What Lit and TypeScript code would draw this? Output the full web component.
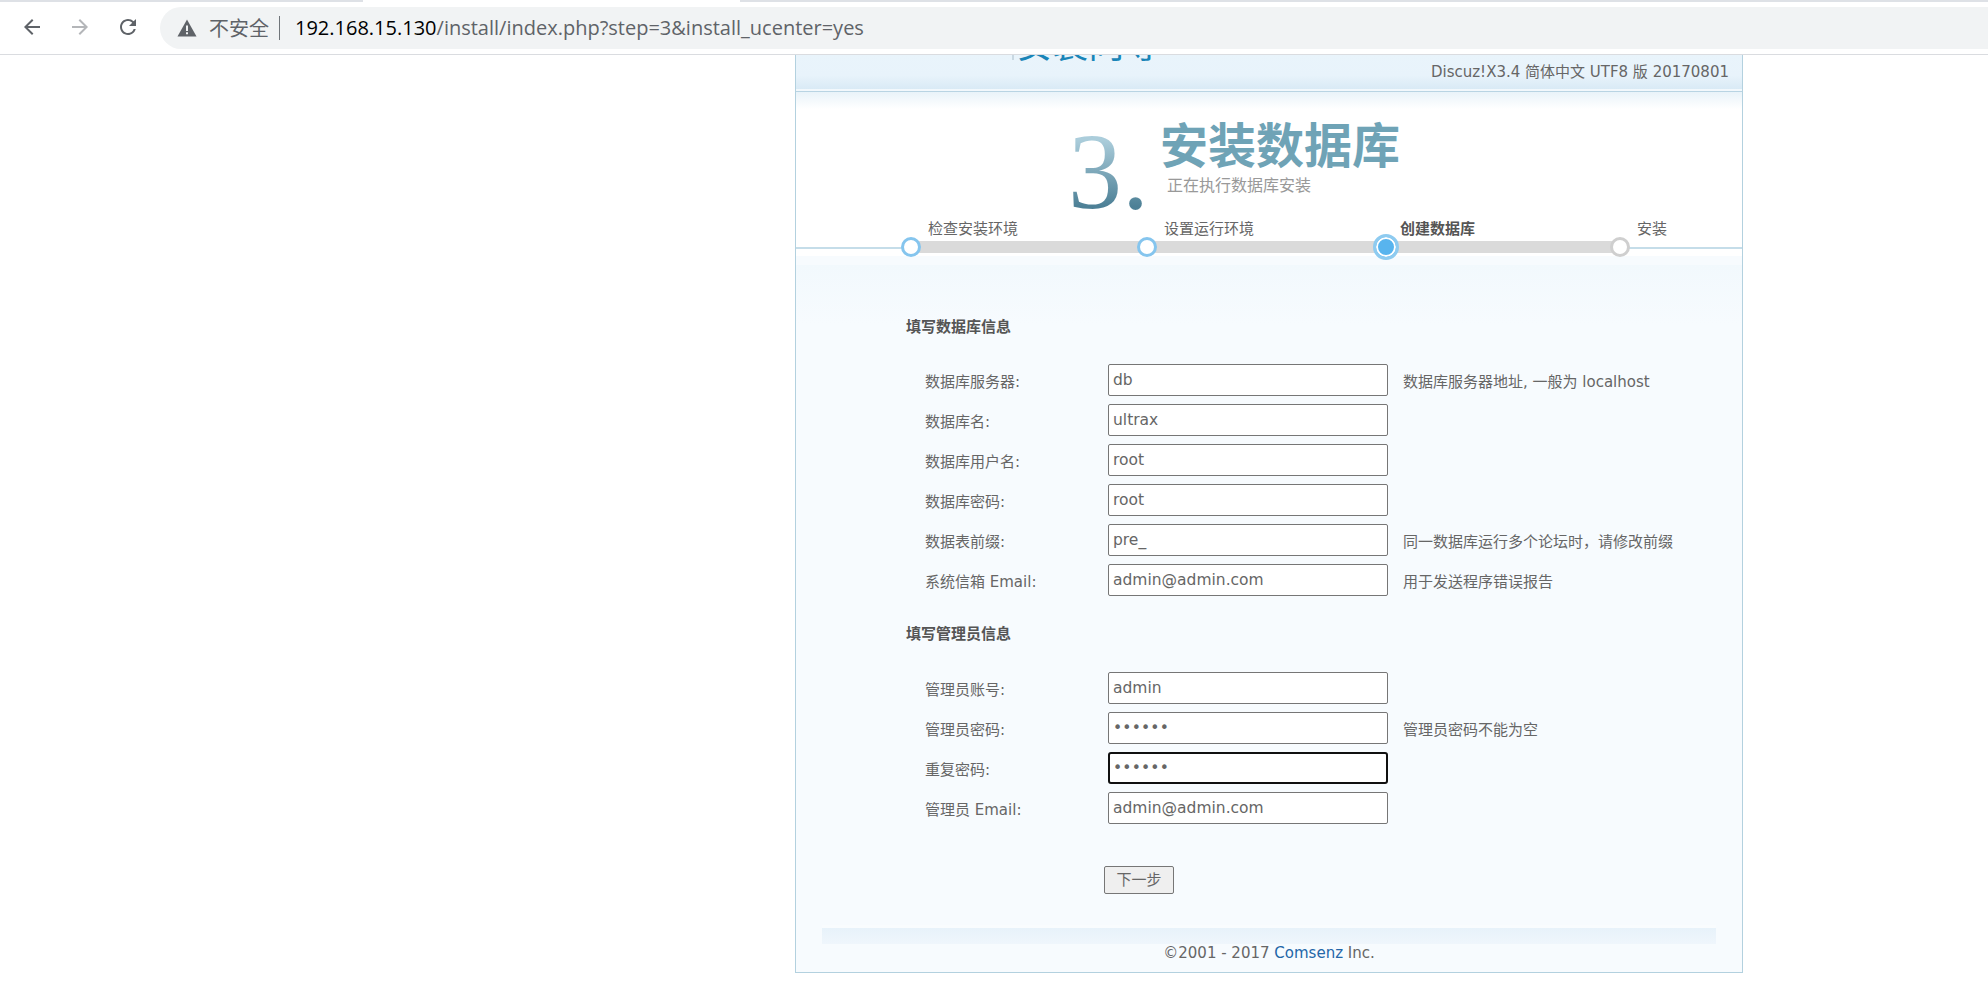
import { LitElement, html, css } from "lit";
import { customElement } from "lit/decorators.js";

const DB_ROWS = [
  { label: "数据库服务器:", value: "db", hint: "数据库服务器地址, 一般为 localhost" },
  { label: "数据库名:", value: "ultrax", hint: "" },
  { label: "数据库用户名:", value: "root", hint: "" },
  { label: "数据库密码:", value: "root", hint: "" },
  { label: "数据表前缀:", value: "pre_", hint: "同一数据库运行多个论坛时，请修改前缀" },
  { label: "系统信箱 Email:", value: "admin@admin.com", hint: "用于发送程序错误报告" },
];
const ADMIN_ROWS = [
  { label: "管理员账号:", value: "admin", hint: "" },
  { label: "管理员密码:", value: "••••••", hint: "管理员密码不能为空", pw: true },
  { label: "重复密码:", value: "••••••", hint: "", pw: true, focus: true },
  { label: "管理员 Email:", value: "admin@admin.com", hint: "" },
];
const STEPS = [
  { label: "检查安装环境", cls: "s1 done" },
  { label: "设置运行环境", cls: "s2 done" },
  { label: "创建数据库", cls: "s3 current" },
  { label: "安装", cls: "s4 todo" },
];

@customElement("app-root")
export class AppRoot extends LitElement {
  static styles = css`
    :host {
      display: block;
      width: 1988px;
      height: 986px;
      overflow: hidden;
      background: #fff;
      font-family: "DejaVu Sans", "Noto Sans CJK SC", sans-serif;
      font-size: 15px;
      color: #666;
    }
    .chrome {
      position: relative;
      z-index: 2;
      height: 55px;
      box-sizing: border-box;
      background: #fff;
      border-bottom: 1px solid #dadce0;
      display: flex;
      align-items: center;
      padding: 0 0 0 20px;
    }
    .tabedge {
      position: absolute;
      top: 0;
      height: 2px;
      background: #dee1e6;
    }
    .tabedge.l { left: 0; width: 363px; }
    .tabedge.r { left: 740px; right: 0; }
    .nav {
      width: 24px;
      height: 24px;
      margin-right: 24px;
      flex: none;
    }
    .nav svg { display: block; }
    .omni {
      flex: 1;
      margin-left: -4px;
      height: 42px;
      margin-top: 1px;
      background: #f1f3f4;
      border-radius: 21px 0 0 21px;
      display: flex;
      align-items: center;
      padding-left: 17px;
      font-family: "Open Sans", "Noto Sans CJK SC", sans-serif;
      font-size: 20px;
      color: #5f6368;
      white-space: nowrap;
    }
    .warn { margin-right: 12px; flex: none; }
    .sep { width: 1px; height: 24px; background: #70757a; margin: 0 15px 0 10px; }
    .host { color: #000; }
    .card {
      width: 948px;
      height: 918px;
      box-sizing: border-box;
      margin-left: 795px;
      border: 1px solid #b3d1df;
      border-top: 0;
      background: #f7fbfe;
    }
    .head {
      height: 34px;
      background: linear-gradient(#e9f4fb 0%, #e8f3fb 60%, #d9eaf5 100%);
      display: flex;
      align-items: flex-end;
      justify-content: space-between;
      overflow: hidden;
      padding-right: 13px;
      white-space: nowrap;
    }
    .logo {
      display: flex;
      align-items: flex-end;
      height: 5px;
      margin: 0 0 29px 35px;
    }
    .logo b {
      font: italic bold 48px/48px "Liberation Sans", sans-serif;
      color: #f7941d;
      height: 48px;
      margin-top: -43px;
      display: block;
      letter-spacing: -0.5px;
    }
    .logo i {
      display: block;
      width: 2px;
      height: 5px;
      background: #c9d8e2;
      margin: 0 2px 0 14px;
    }
    .logo span {
      font: 36px/36px "Noto Sans CJK SC", sans-serif;
      color: #1a85b8;
      height: 36px;
      margin-top: -31px;
      display: block;
    }
    .ver { line-height: 34px; height: 34px; }
    .rule {
      height: 3px;
      background: linear-gradient(#f2f8fc 0 2px, #b9d4e3 2px);
    }
    .white {
      height: 164px;
      background: linear-gradient(#e9f3f9, #fff 17px);
      display: flex;
      align-items: flex-start;
      padding: 0 0 0 272px;
    }
    .three {
      font: 108px/108px "Liberation Serif", serif;
      background: linear-gradient(#abcddb 20%, #4d8096 82%);
      -webkit-background-clip: text;
      background-clip: text;
      color: transparent;
      margin-top: 26px;
      height: 108px;
      width: 92px;
      flex: none;
    }
    .ttl h1 {
      margin: 20px 0 0;
      font: bold 48px/60px "Noto Sans CJK SC", sans-serif;
      color: #6fa3b6;
      letter-spacing: 0;
    }
    .ttl p {
      margin: 2px 0 0 7px;
      font-size: 16px;
      line-height: 24px;
      color: #999;
    }
    .steps {
      display: flex;
      height: 44px;
      margin-top: -35px;
      padding-left: 115px;
      background: linear-gradient(#c5dde9, #c5dde9) 0 26px / 100% 2px no-repeat,
        linear-gradient(#fff, #fff) 0 0 / 100% 26px no-repeat;
      position: relative;
    }
    .step { position: relative; height: 44px; flex: none; }
    .s1 { width: 236px; }
    .s2 { width: 239px; }
    .s3 { width: 234px; }
    .s4 { width: 100px; }
    .step::before {
      content: "";
      position: absolute;
      left: 0;
      right: 0;
      top: 20px;
      height: 12px;
      background: #dadada;
    }
    .s4::before { display: none; }
    .step .dot {
      position: absolute;
      box-sizing: border-box;
      left: -10px;
      top: 16px;
      width: 20px;
      height: 20px;
      border-radius: 50%;
      background: #fff;
      border: 3px solid #85c5ee;
    }
    .todo .dot { border-color: #cfcfcf; }
    .current .dot {
      left: -13px;
      top: 13px;
      width: 26px;
      height: 26px;
      border: 3px solid #8ecbf0;
      box-shadow: inset 0 0 0 2px #fff;
      background: #58b4ee;
    }
    .step label {
      position: absolute;
      left: 17px;
      top: -3px;
      font-size: 15px;
      line-height: 22px;
      white-space: nowrap;
    }
    .current label { left: 14px; font-weight: bold; color: #555; }
    .form {
      height: 660px;
      background: linear-gradient(#f2f9fd, #f7fbfe 60px);
      padding: 0 0 0 110px;
      box-sizing: border-box;
    }
    .sect {
      margin: 0;
      font-size: 15px;
      font-weight: bold;
      line-height: 24px;
      color: #555;
    }
    .sect.a { padding-top: 50px; }
    .sect.b { padding-top: 26px; }
    .grid {
      display: grid;
      grid-template-columns: 183px 280px auto;
      row-gap: 8px;
      padding-left: 19px;
      margin-top: 25px;
    }
    .grid.b { row-gap: 8px; margin-top: 26px; }
    .grid > div { display: flex; align-items: center; white-space: nowrap; }
    .lab { height: 32px; }
    .inp {
      box-sizing: border-box;
      height: 32px;
      width: 280px;
      background: #fff;
      border: 1px solid #767676;
      border-radius: 2px;
      padding-left: 4px;
      font-size: 15.5px;
    }
    .inp.focus { border: 2px solid #101010; border-radius: 3px; padding-left: 3px; }
    .pw { letter-spacing: 0.2px; font-size: 15.5px; }
    .hint { padding-left: 15px; }
    .btn {
      display: block;
      box-sizing: border-box;
      margin: 42px 0 0 198px;
      width: 70px;
      height: 28px;
      border: 1px solid #767676;
      border-radius: 2px;
      background: #efefef;
      font: 15px/26px "DejaVu Sans", "Noto Sans CJK SC", sans-serif;
      color: #666;
      padding: 0;
    }
    .foot-bar {
      height: 19px;
      margin: 0 26px;
      background: linear-gradient(#f9fcfe 0 3px, #e7f2fa 3px, #eff6fc);
    }
    .foot {
      text-align: center;
      font-size: 15px;
      line-height: 18px;
      margin-top: 0;
      padding-right: 0;
    }
    .foot a { color: #2366a8; text-decoration: none; }
    .foot-wrap { background: #f7fbfe; }
  `;

  private row(r: any) {
    return html`
      <div class="lab">${r.label}</div>
      <div class="inp ${r.focus ? "focus" : ""} ${r.pw ? "pw" : ""}">${r.value}</div>
      <div class="hint">${r.hint}</div>
    `;
  }

  render() {
    return html`
      <div class="chrome">
        <i class="tabedge l"></i><i class="tabedge r"></i>
        <div class="nav">
          <svg width="24" height="24" viewBox="0 0 24 24" fill="#5f6368"><path d="M20 11H7.83l5.59-5.59L12 4l-8 8 8 8 1.41-1.41L7.83 13H20v-2z"/></svg>
        </div>
        <div class="nav">
          <svg width="24" height="24" viewBox="0 0 24 24" fill="#b4b6b9"><path d="M12 4l-1.41 1.41L16.17 11H4v2h12.17l-5.58 5.59L12 20l8-8z"/></svg>
        </div>
        <div class="nav">
          <svg width="24" height="24" viewBox="0 0 24 24" fill="#5f6368"><path d="M17.65 6.35A7.958 7.958 0 0 0 12 4c-4.42 0-7.99 3.58-7.99 8s3.57 8 7.99 8c3.73 0 6.84-2.55 7.73-6h-2.08A5.99 5.99 0 0 1 12 18c-3.31 0-6-2.69-6-6s2.69-6 6-6c1.66 0 3.14.69 4.22 1.78L13 11h7V4l-2.35 2.35z"/></svg>
        </div>
        <div class="omni">
          <svg class="warn" width="20" height="20" viewBox="0 0 20 20" fill="#5f6368"><path d="M10 1.5 19.5 18.5H.5z"/><path d="M9 7.5h2v5.5H9zM9 14.3h2v2H9z" fill="#f1f3f4"/></svg>
          <span>不安全</span><i class="sep"></i>
          <span><span class="host">192.168.15.130</span>/install/index.php?step=3&amp;install_ucenter=yes</span>
        </div>
      </div>
      <div class="card">
        <div class="head">
          <div class="logo"><b>Discuz!</b><i></i><span>安装向导</span></div>
          <div class="ver">Discuz!X3.4 简体中文 UTF8 版 20170801</div>
        </div>
        <div class="rule"></div>
        <div class="white">
          <div class="three">3.</div>
          <div class="ttl">
            <h1>安装数据库</h1>
            <p>正在执行数据库安装</p>
          </div>
        </div>
        <div class="steps">
          ${STEPS.map(
            (s) => html`<div class="step ${s.cls}"><span class="dot"></span><label>${s.label}</label></div>`
          )}
        </div>
        <div class="form">
          <h3 class="sect a">填写数据库信息</h3>
          <div class="grid">${DB_ROWS.map((r) => this.row(r))}</div>
          <h3 class="sect b">填写管理员信息</h3>
          <div class="grid b">${ADMIN_ROWS.map((r) => this.row(r))}</div>
          <button class="btn">下一步</button>
        </div>
        <div class="foot-bar"></div>
        <div class="foot">©2001 - 2017 <a>Comsenz</a> Inc.</div>
      </div>
    `;
  }
}
